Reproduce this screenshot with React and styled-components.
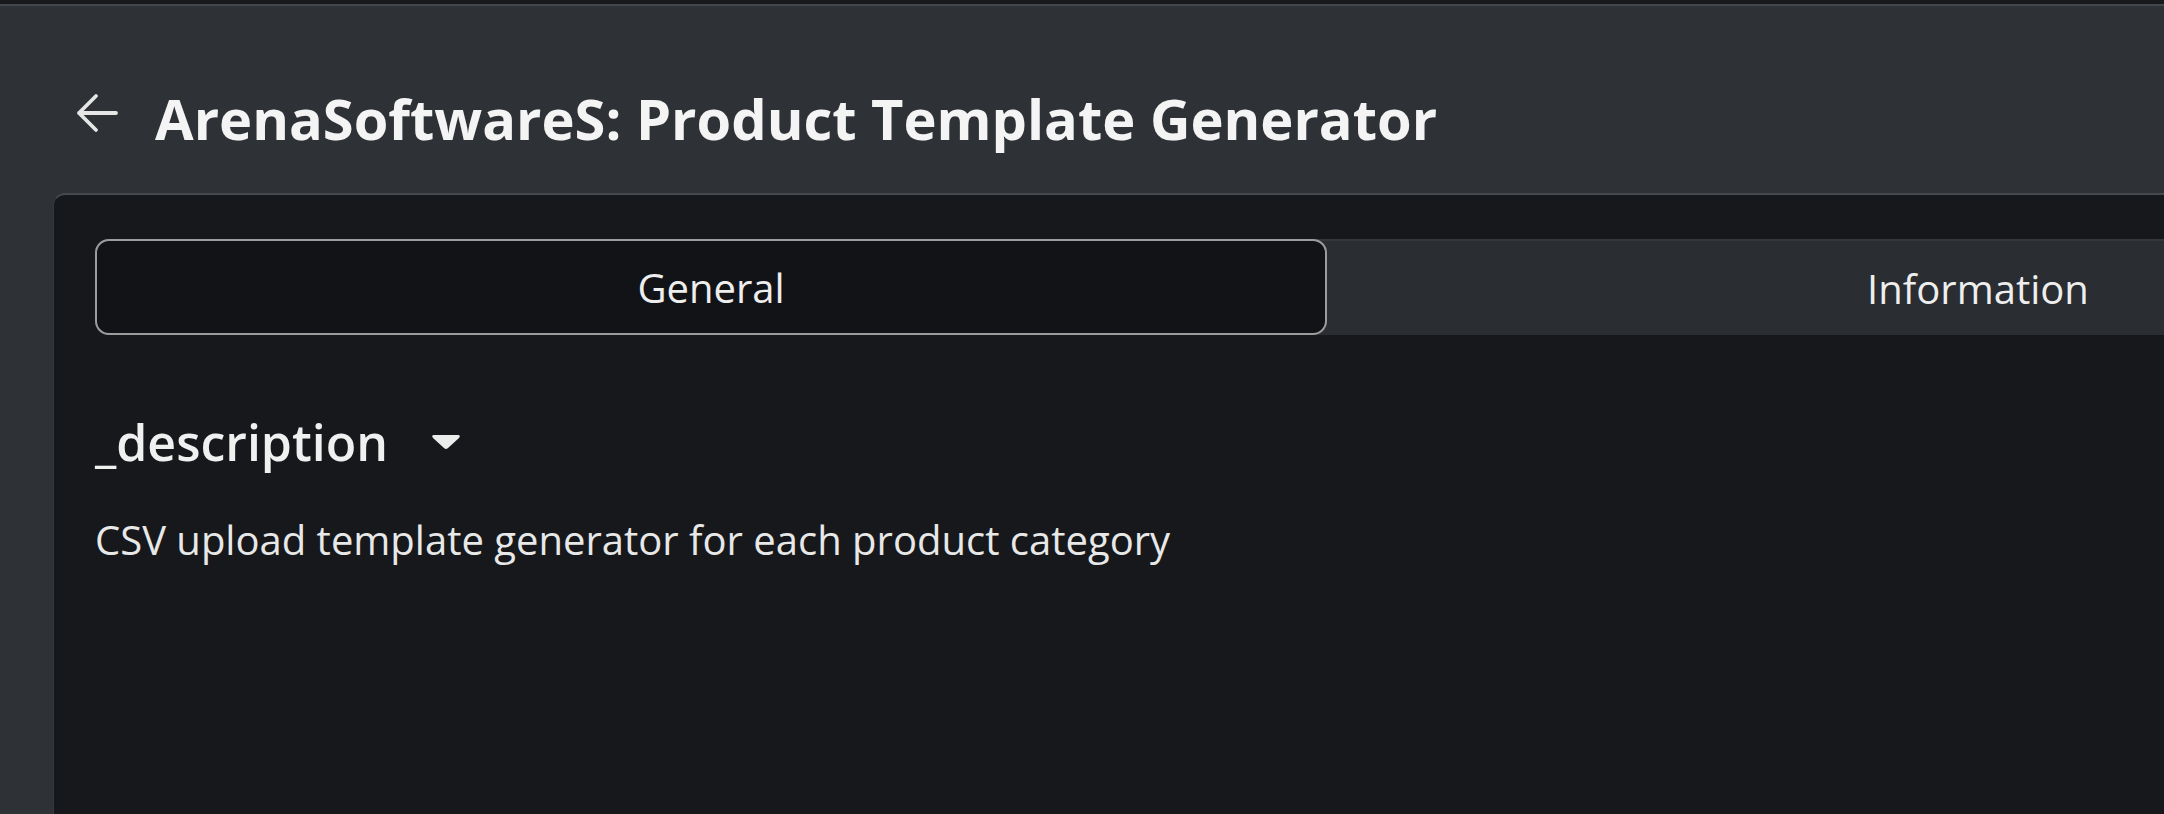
import React, { useState } from 'react'
import styled, { createGlobalStyle } from 'styled-components'

const GlobalStyle = createGlobalStyle`
  html, body {
    margin: 0;
    padding: 0;
    background: #2e3135;
    overflow: hidden;
  }
  body {
    font-family: "Open Sans", "Noto Sans", sans-serif;
    color: #ececec;
  }
`;

const TABS = ['General', 'Information'];

function BackArrow() {
  return (
    <svg width="44" height="40" viewBox="0 0 44 40" fill="none">
      <path d="M21 3 L4 20 L21 37 M4 20 H41" stroke="#e6e6e6" strokeWidth="3.8"
        strokeLinecap="round" strokeLinejoin="round" />
    </svg>
  );
}

function Caret() {
  return (
    <svg width="32" height="18" viewBox="0 0 32 18">
      <path d="M4 2 H28 Q31 2 29 5 L18 15 Q16 17 14 15 L3 5 Q1 2 4 2 Z" fill="#ececec" />
    </svg>
  );
}

export default function App() {
  const [active, setActive] = useState('General');
  return (
    <Page>
      <GlobalStyle />
      <TopStrip />
      <Header>
        <BackButton><BackArrow /></BackButton>
        <Title>ArenaSoftwareS: Product Template Generator</Title>
      </Header>
      <Panel>
        <TabList>
          {TABS.map((t) => (
            <Tab key={t} $active={active === t} onClick={() => setActive(t)}>{t}</Tab>
          ))}
        </TabList>
        <Section>
          <SectionHead>
            <SectionTitle>_description</SectionTitle>
            <Caret />
          </SectionHead>
          <Description>CSV upload template generator for each product category</Description>
        </Section>
      </Panel>
    </Page>
  );
}

const Page = styled.div`
  width: 100vw;
  height: 100vh;
  display: flex;
  flex-direction: column;
  overflow: hidden;
`;

const TopStrip = styled.div`
  flex: none;
  height: 4px;
  background: #17191c;
  border-bottom: 2px solid #43464a;
`;

const Header = styled.div`
  flex: none;
  display: flex;
  align-items: flex-start;
  gap: 36px;
  padding: 87px 0 0 75px;
  box-sizing: border-box;
  height: 187px;
`;

const BackButton = styled.div`
  width: 44px;
  height: 40px;
  display: flex;
`;

const Title = styled.h1`
  margin: 0;
  font-size: 56px;
  line-height: 50px;
  font-weight: 700;
  color: #f4f4f4;
  white-space: nowrap;
`;

const Panel = styled.div`
  flex: 1;
  margin-left: 53px;
  width: 2700px;
  background: #16181b;
  border-top: 2px solid #46494d;
  border-left: 1px solid #35383c;
  border-top-left-radius: 12px;
  padding: 44px 0 0 41px;
  box-sizing: border-box;
`;

const TabList = styled.div`
  width: 2534px;
  height: 96px;
  display: grid;
  grid-template-columns: 1232px 1fr;
  background: #2a2d31;
  border-top: 2px solid #34373b;
  border-radius: 14px;
  box-sizing: border-box;
`;

const Tab = styled.div`
  display: flex;
  align-items: center;
  justify-content: center;
  margin-top: ${(p) => (p.$active ? '-2px' : '0')};
  border: ${(p) => (p.$active ? '2px solid #9c9c9c' : 'none')};
  border-radius: 14px;
  background: ${(p) => (p.$active ? '#121317' : 'transparent')};
  font-size: 40px;
  color: #eeeeee;
  cursor: pointer;
`;

const Section = styled.div`
  padding-top: 77px;
`;

const SectionHead = styled.div`
  display: flex;
  align-items: center;
  gap: 42px;
`;

const SectionTitle = styled.h2`
  margin: 0;
  font-size: 50px;
  line-height: 60px;
  font-weight: 600;
  color: #f0f0f0;
`;

const Description = styled.p`
  margin: 44px 0 0;
  font-size: 40px;
  line-height: 48px;
  color: #e8e8e8;
`;
